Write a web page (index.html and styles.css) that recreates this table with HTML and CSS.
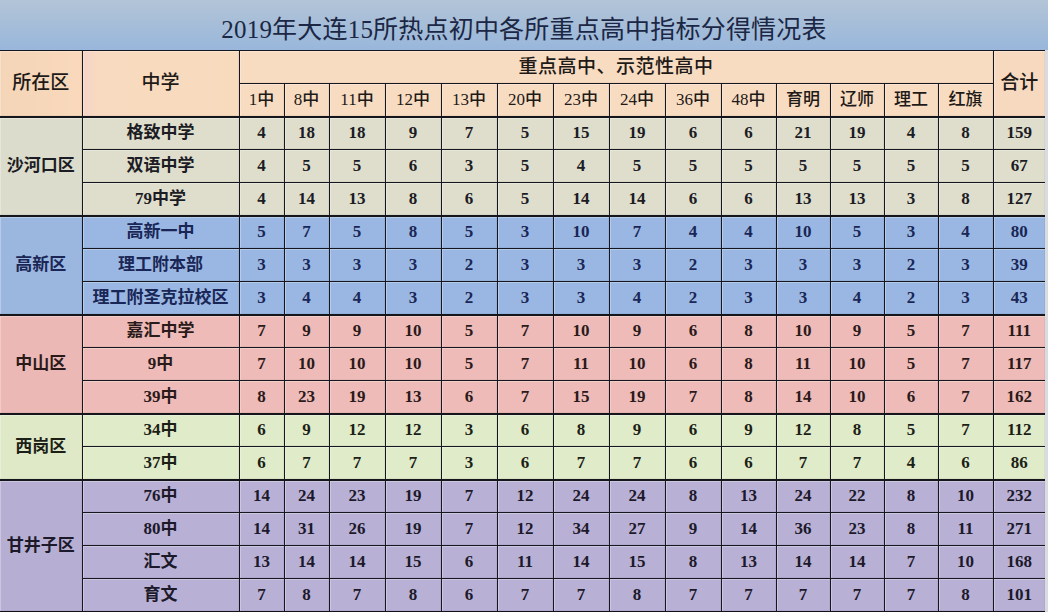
FILE: index.html
```html
<!DOCTYPE html>
<html lang="zh-CN">
<head>
<meta charset="utf-8">
<title>2019年大连15所热点初中各所重点高中指标分得情况表</title>
<link rel="stylesheet" href="styles.css">
</head>
<body>
<div class="sheet">
  <div class="title">2019年大连15所热点初中各所重点高中指标分得情况表</div>
  <table class="grid">
    <colgroup>
      <col class="c-dist"><col class="c-school">
      <col class="c-s"><col class="c-s">
      <col class="c-m"><col class="c-m"><col class="c-m"><col class="c-m"><col class="c-m"><col class="c-m"><col class="c-m">
      <col class="c-n"><col class="c-w"><col class="c-w"><col class="c-w"><col class="c-n">
      <col class="c-total">
    </colgroup>
    <thead>
      <tr>
        <th rowspan="2" class="h-dist">所在区</th>
        <th rowspan="2" class="h-school">中学</th>
        <th colspan="14" class="h-group">重点高中、示范性高中</th>
        <th rowspan="2" class="h-total">合计</th>
      </tr>
      <tr class="h-cols">
        <th>1中</th><th>8中</th><th>11中</th><th>12中</th><th>13中</th><th>20中</th><th>23中</th><th>24中</th><th>36中</th><th>48中</th><th>育明</th><th>辽师</th><th>理工</th><th>红旗</th>
      </tr>
    </thead>
    <tbody class="g g-sh">
      <tr><th rowspan="3" class="dist">沙河口区</th><th class="school">格致中学</th><td>4</td><td>18</td><td>18</td><td>9</td><td>7</td><td>5</td><td>15</td><td>19</td><td>6</td><td>6</td><td>21</td><td>19</td><td>4</td><td>8</td><td>159</td></tr>
      <tr><th class="school">双语中学</th><td>4</td><td>5</td><td>5</td><td>6</td><td>3</td><td>5</td><td>4</td><td>5</td><td>5</td><td>5</td><td>5</td><td>5</td><td>5</td><td>5</td><td>67</td></tr>
      <tr><th class="school">79中学</th><td>4</td><td>14</td><td>13</td><td>8</td><td>6</td><td>5</td><td>14</td><td>14</td><td>6</td><td>6</td><td>13</td><td>13</td><td>3</td><td>8</td><td>127</td></tr>
    </tbody>
    <tbody class="g g-gx">
      <tr><th rowspan="3" class="dist">高新区</th><th class="school">高新一中</th><td>5</td><td>7</td><td>5</td><td>8</td><td>5</td><td>3</td><td>10</td><td>7</td><td>4</td><td>4</td><td>10</td><td>5</td><td>3</td><td>4</td><td>80</td></tr>
      <tr><th class="school">理工附本部</th><td>3</td><td>3</td><td>3</td><td>3</td><td>2</td><td>3</td><td>3</td><td>3</td><td>2</td><td>3</td><td>3</td><td>3</td><td>2</td><td>3</td><td>39</td></tr>
      <tr><th class="school">理工附圣克拉校区</th><td>3</td><td>4</td><td>4</td><td>3</td><td>2</td><td>3</td><td>3</td><td>4</td><td>2</td><td>3</td><td>3</td><td>4</td><td>2</td><td>3</td><td>43</td></tr>
    </tbody>
    <tbody class="g g-zs">
      <tr><th rowspan="3" class="dist">中山区</th><th class="school">嘉汇中学</th><td>7</td><td>9</td><td>9</td><td>10</td><td>5</td><td>7</td><td>10</td><td>9</td><td>6</td><td>8</td><td>10</td><td>9</td><td>5</td><td>7</td><td>111</td></tr>
      <tr><th class="school">9中</th><td>7</td><td>10</td><td>10</td><td>10</td><td>5</td><td>7</td><td>11</td><td>10</td><td>6</td><td>8</td><td>11</td><td>10</td><td>5</td><td>7</td><td>117</td></tr>
      <tr><th class="school">39中</th><td>8</td><td>23</td><td>19</td><td>13</td><td>6</td><td>7</td><td>15</td><td>19</td><td>7</td><td>8</td><td>14</td><td>10</td><td>6</td><td>7</td><td>162</td></tr>
    </tbody>
    <tbody class="g g-xg">
      <tr><th rowspan="2" class="dist">西岗区</th><th class="school">34中</th><td>6</td><td>9</td><td>12</td><td>12</td><td>3</td><td>6</td><td>8</td><td>9</td><td>6</td><td>9</td><td>12</td><td>8</td><td>5</td><td>7</td><td>112</td></tr>
      <tr><th class="school">37中</th><td>6</td><td>7</td><td>7</td><td>7</td><td>3</td><td>6</td><td>7</td><td>7</td><td>6</td><td>6</td><td>7</td><td>7</td><td>4</td><td>6</td><td>86</td></tr>
    </tbody>
    <tbody class="g g-gj">
      <tr><th rowspan="4" class="dist">甘井子区</th><th class="school">76中</th><td>14</td><td>24</td><td>23</td><td>19</td><td>7</td><td>12</td><td>24</td><td>24</td><td>8</td><td>13</td><td>24</td><td>22</td><td>8</td><td>10</td><td>232</td></tr>
      <tr><th class="school">80中</th><td>14</td><td>31</td><td>26</td><td>19</td><td>7</td><td>12</td><td>34</td><td>27</td><td>9</td><td>14</td><td>36</td><td>23</td><td>8</td><td>11</td><td>271</td></tr>
      <tr><th class="school">汇文</th><td>13</td><td>14</td><td>14</td><td>15</td><td>6</td><td>11</td><td>14</td><td>15</td><td>8</td><td>13</td><td>14</td><td>14</td><td>7</td><td>10</td><td>168</td></tr>
      <tr><th class="school">育文</th><td>7</td><td>8</td><td>7</td><td>8</td><td>6</td><td>7</td><td>7</td><td>8</td><td>7</td><td>7</td><td>7</td><td>7</td><td>7</td><td>8</td><td>101</td></tr>
    </tbody>
  </table>
</div>
</body>
</html>
```

FILE: styles.css
```css
html, body {
  margin: 0;
  padding: 0;
  background: #1a1a22;
}

.sheet {
  width: 1048px;
  height: 612px;
  overflow: hidden;
  background: #d8dbe0;
  font-family: "Liberation Serif", "Noto Sans CJK SC", serif;
  color: #1c1c24;
}

.title {
  height: 50px;
  display: flex;
  align-items: center;
  justify-content: center;
  padding-top: 3px;
  box-sizing: border-box;
  background: linear-gradient(180deg, #b3c4d7 0%, #a3bcd9 60%, #99b7dc 100%);
  font-size: 25px;
  color: #1b2744;
  letter-spacing: 0.2px;
}

.grid {
  width: 1045px;
  table-layout: fixed;
  border-collapse: collapse;
  border-top: 1px solid #15151c;
  border-bottom: 2px solid #101016;
}

.c-dist { width: 82px; }
.c-school { width: 157px; }
.c-s { width: 45px; }
.c-m { width: 56px; }
.c-n { width: 55px; }
.c-w { width: 54px; }
.c-total { width: 52px; }

.grid tr { height: 33px; }

.grid th,
.grid td {
  padding: 0;
  text-align: center;
  vertical-align: middle;
  border: 1px solid #16161e;
  font-size: 17px;
  font-weight: 700;
  line-height: 20px;
  box-shadow: inset 1px 1px 0 rgba(255, 255, 255, 0.28), inset -1px -1px 0 rgba(0, 0, 0, 0.04);
}

.grid th:first-child { border-left: none; }
.grid tr > :last-child { border-right: none; }

.grid thead th {
  background: #f8dcc1;
  font-weight: 500;
  color: #1e1a18;
}

.grid thead .h-dist { background: linear-gradient(90deg, #f4d5b8, #f9d8bb); font-size: 19px; }
.grid thead .h-school { background: linear-gradient(90deg, #f5d3c8 0%, #f8dac0 10%, #f8dbbd 100%); font-size: 19px; }
.grid thead .h-group { font-size: 19px; letter-spacing: 0.5px; background: #f8dcc2; }
.grid thead .h-total { font-size: 19px; background: #f7d9bf; }
.h-cols th { font-size: 17px; }

.dist { font-size: 17px; }
.school { font-size: 17px; }

.g { border-top: 2px solid #15151c; }

.g-sh th, .g-sh td { background: #dfdecd; }
.g-sh .dist { background: #dcdccd; }

.g-gx th, .g-gx td { background: #99b7e2; color: #1a2656; }
.g-gx .dist { background: #9bb7df; }

.g-zs th, .g-zs td { background: #eebbb8; color: #2a1a1a; }
.g-zs .dist { background: #ecb8b6; }

.g-xg th, .g-xg td { background: #e0ebca; color: #1c1f16; }
.g-xg .dist { background: #dfe9c8; }

.g-gj th, .g-gj td { background: #b9b0d6; color: #1c1a2a; }
.g-gj .dist { background: #b7afd3; }
```
